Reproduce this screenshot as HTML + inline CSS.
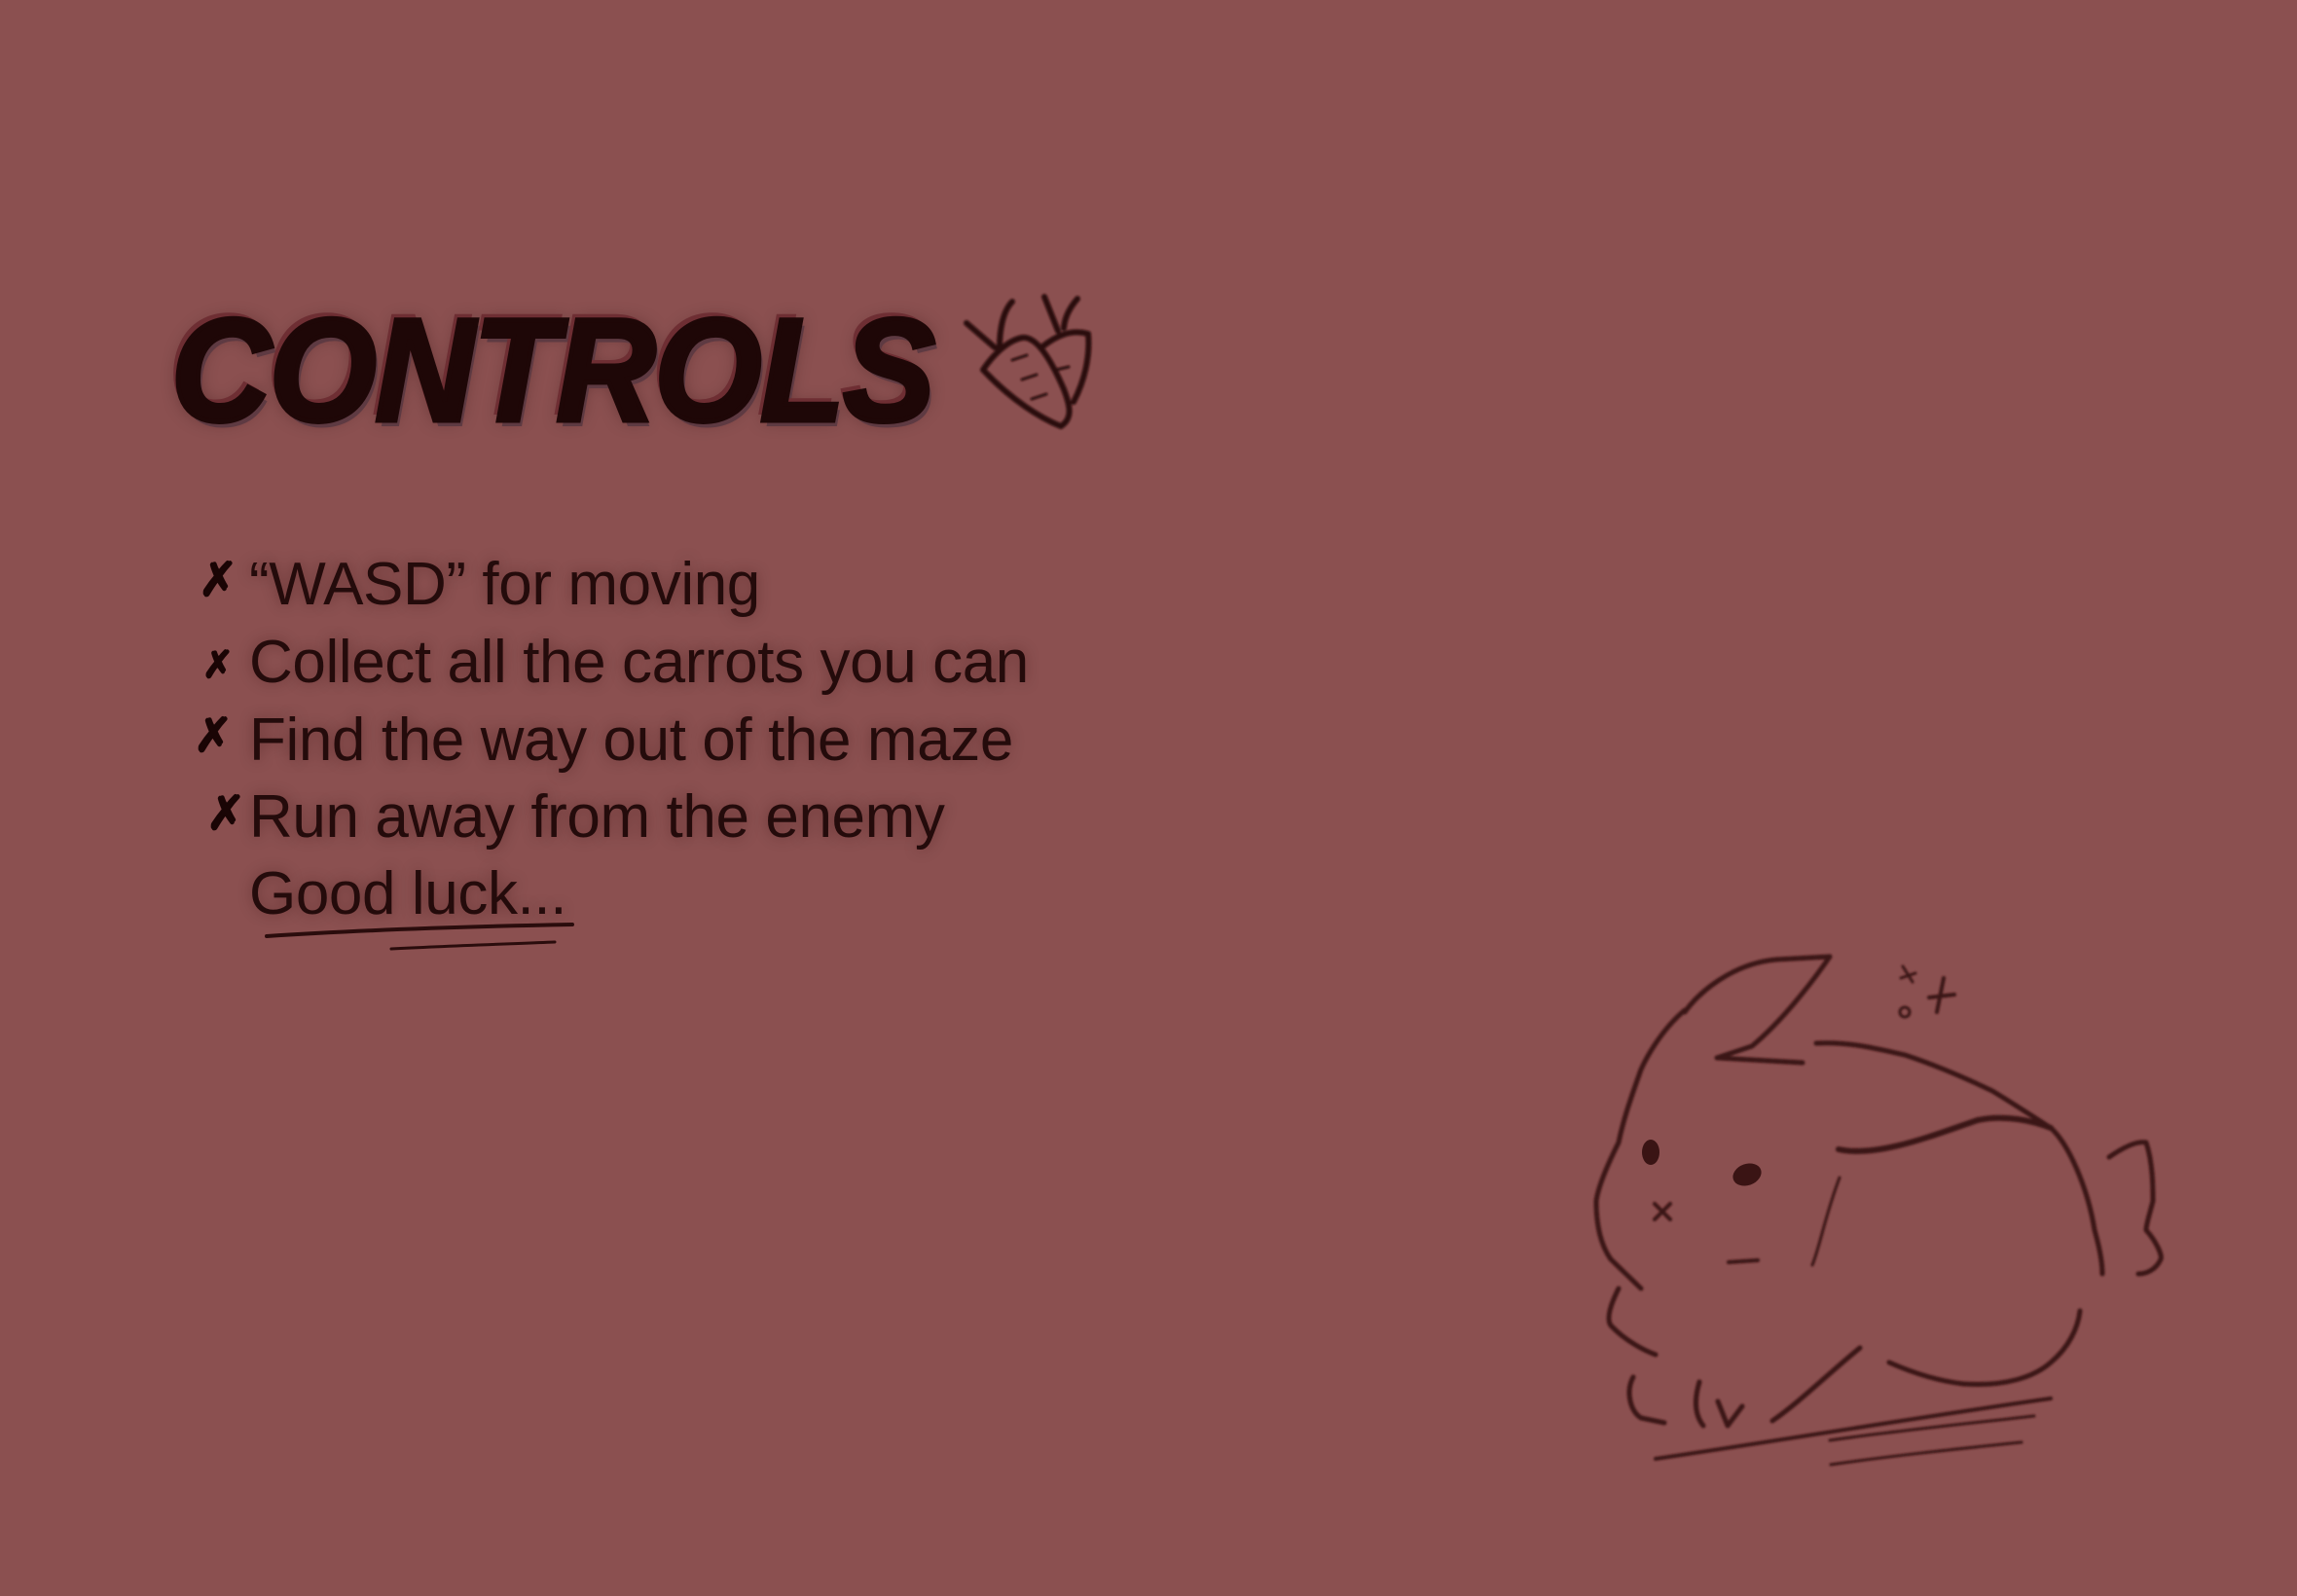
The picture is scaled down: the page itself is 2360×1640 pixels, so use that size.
<!DOCTYPE html>
<html><head><meta charset="utf-8"><style>
html,body{margin:0;padding:0;}
body{width:2360px;height:1640px;background:#8b5050;position:relative;overflow:hidden;font-family:"Liberation Sans",sans-serif;color:#1f0909;}
.title{position:absolute;left:176px;top:300px;font:italic bold 150px/160px "Liberation Sans",sans-serif;color:#1e0707;-webkit-text-stroke:5px #1e0707;transform-origin:0 0;transform:scaleX(0.94);letter-spacing:-1px;text-shadow:-5px -6px 0 #6e2e33,4px 6px 0 #5e3a42,0 0 18px rgba(30,0,0,.35);}
.li{position:absolute;left:256px;font-size:62px;line-height:80px;white-space:nowrap;letter-spacing:-0.4px;color:#240b0b;text-shadow:0 0 14px rgba(40,5,5,.35);}
.b{position:absolute;font:bold 48px/80px "DejaVu Sans",sans-serif;color:#1a0505;-webkit-text-stroke:2px #1a0505;}
svg{position:absolute;left:0;top:0;}
</style></head><body>
<div class="title">CONTROLS</div>
<div class="li" style="top:561px">“WASD” for moving</div>
<div class="li" style="top:641px">Collect all the carrots you can</div>
<div class="li" style="top:721px">Find the way out of the maze</div>
<div class="li" style="top:800px">Run away from the enemy</div>
<div class="li" style="top:879px">Good luck...</div>
<div class="b" style="left:204px;top:556px">✗</div>
<div class="b" style="left:208px;top:643px;font-size:38px">✗</div>
<div class="b" style="left:199px;top:716px">✗</div>
<div class="b" style="left:212px;top:796px">✗</div>
<svg width="2360" height="1640" viewBox="0 0 2360 1640" fill="none" stroke="#3a1414" stroke-linecap="round" stroke-linejoin="round">
<defs><filter id="s"><feGaussianBlur stdDeviation="1"/></filter></defs>
<g stroke="#2a0c0c" stroke-width="4">
<path d="M274 962 C380 955 480 952 588 950"/>
<path d="M402 975 C460 972 520 970 570 968" stroke-width="3"/>
</g>
<g stroke="#2a0a0a" stroke-width="6" filter="url(#s)">
<path d="M1010 380 C1020 365 1035 350 1050 347 C1065 345 1080 370 1093 400 C1100 418 1102 430 1090 438 C1070 430 1040 412 1010 380 Z"/>
<path d="M993 332 L1022 357 M1040 310 C1030 320 1027 340 1027 357"/>
<path d="M1070 357 C1085 345 1100 338 1118 343 C1120 365 1115 390 1103 413"/>
<path d="M1073 305 L1087 340 M1107 307 C1100 315 1094 325 1093 337"/>
<path d="M1040 370 L1055 365 M1050 390 L1065 385 M1060 410 L1075 405 M1085 380 L1098 377" stroke-width="3"/>
</g>
<g stroke-width="5" filter="url(#s)">
<path d="M1731 1040 C1745 1020 1780 990 1825 986 L1880 983 C1860 1012 1830 1050 1800 1075 L1764 1087 L1852 1092"/>
<path d="M1731 1038 C1705 1060 1690 1090 1686 1099 C1675 1130 1668 1150 1663 1174 C1650 1200 1642 1220 1640 1234 C1640 1260 1645 1280 1655 1294 L1686 1324"/>
<path d="M1866 1072 C1900 1070 1930 1078 1957 1084 C1990 1095 2020 1108 2047 1121 C2070 1135 2090 1148 2107 1159"/>
<path d="M1889 1181 C1930 1190 1990 1165 2032 1151 C2060 1145 2090 1152 2107 1159" stroke-width="6"/>
<path d="M2107 1159 C2125 1175 2145 1220 2152 1264 C2158 1285 2160 1300 2160 1309"/>
<path d="M2167 1189 C2180 1180 2195 1172 2205 1174 C2212 1195 2212 1220 2212 1234 C2208 1250 2205 1258 2205 1264 C2215 1275 2222 1290 2220 1294 C2215 1305 2205 1309 2197 1309"/>
<path d="M1663 1324 C1655 1340 1650 1355 1655 1362 C1670 1378 1690 1388 1701 1392"/>
<path d="M1678 1415 C1670 1430 1675 1450 1686 1457 L1710 1462"/>
<path d="M1746 1420 C1740 1440 1742 1455 1750 1465 M1765 1440 L1775 1465 L1790 1445"/>
<path d="M1821 1460 C1850 1440 1880 1410 1911 1385"/>
<path d="M1941 1400 C1975 1415 2000 1420 2017 1422 C2060 1425 2090 1415 2107 1400 C2125 1385 2135 1365 2137 1347"/>
<path d="M1890 1210 C1875 1250 1870 1280 1862 1300" stroke-width="3"/>
<path d="M1701 1499 C1830 1480 1980 1455 2107 1437" stroke-width="4"/>
<path d="M1881 1505 C1950 1495 2020 1488 2077 1482 M1880 1480 C1950 1470 2030 1462 2090 1455" stroke-width="3"/>
<path d="M1700 1237 L1716 1253 M1716 1237 L1700 1253" stroke-width="4"/>
<path d="M1776 1297 L1806 1295" stroke-width="4"/>
<path d="M1955 993 L1965 1009 M1953 1005 L1968 1000" stroke-width="3"/>
<circle cx="1957" cy="1040" r="5" stroke-width="3"/>
<path d="M1997 1005 L1990 1040 M1982 1025 L2008 1022" stroke-width="4"/>
</g>
<ellipse cx="1696" cy="1184" rx="9" ry="13" fill="#3a1414" stroke="none"/>
<ellipse cx="1795" cy="1207" rx="15" ry="11" fill="#3a1414" stroke="none" transform="rotate(-20 1795 1207)"/>
</svg>
</body></html>
